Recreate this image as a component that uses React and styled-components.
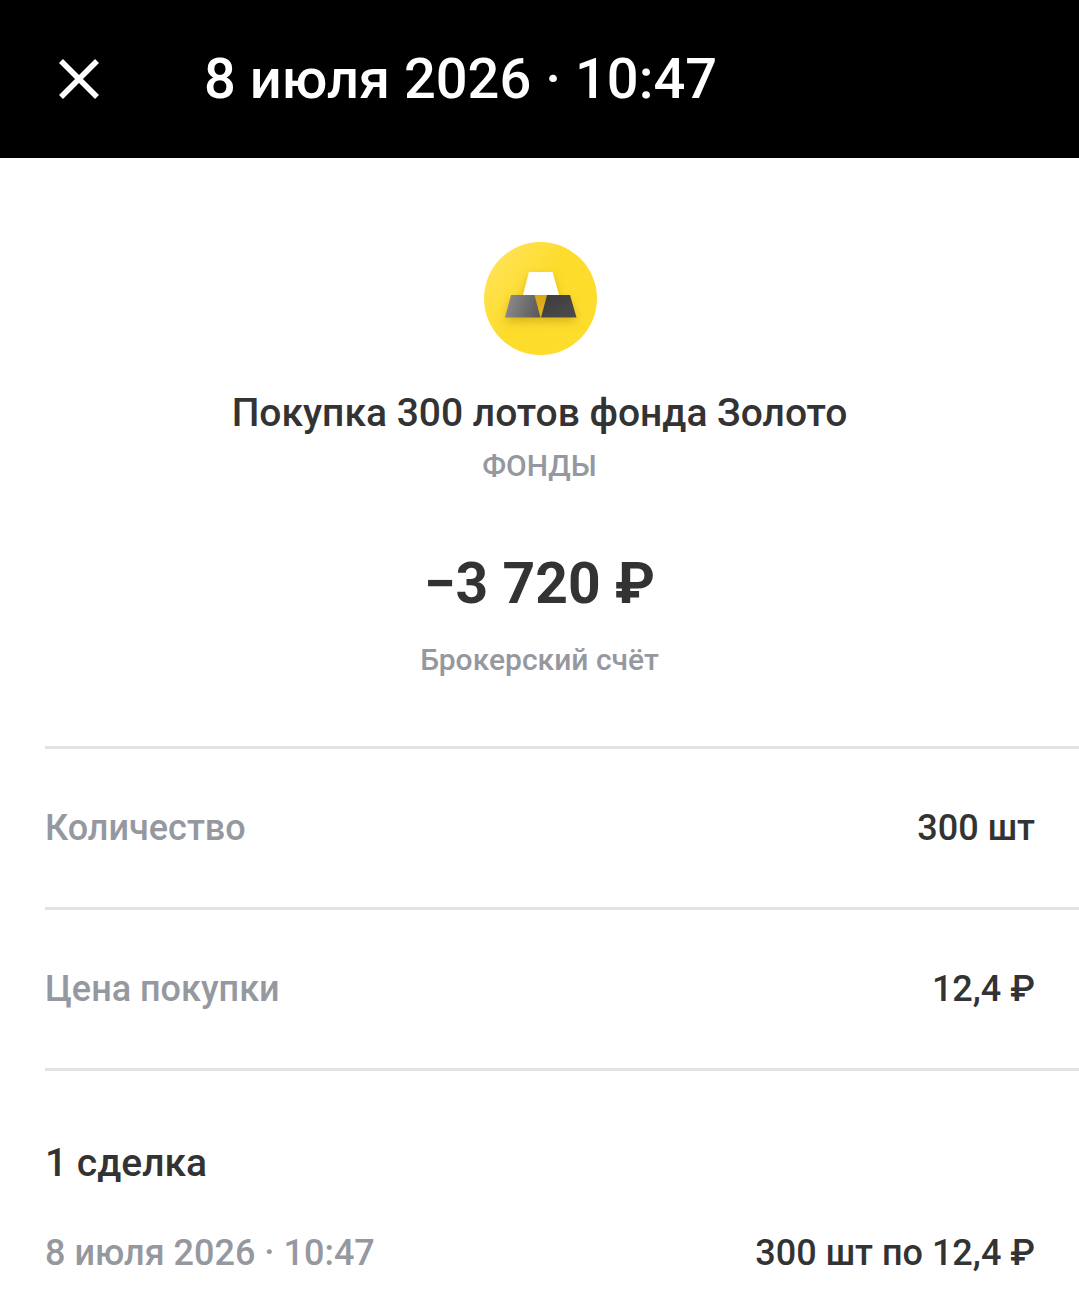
import React from "react";
import styled, { createGlobalStyle } from "styled-components";

const GlobalStyle = createGlobalStyle`
  body {
    margin: 0;
    background: #ffffff;
    color: #333333;
    font-family: Roboto, Arial, sans-serif;
    font-weight: 500;
  }
  * {
    box-sizing: border-box;
  }
`

//Top bar
const Header = styled.header`
  display: flex;
  align-items: center;
  gap: 86px;
  height: 158px;
  padding: 0 40px;
  background: #000000;
  color: #ffffff;
`

const CloseButton = styled.button`
  display: flex;
  padding: 16px;
  border: none;
  background: none;
  color: inherit;
  cursor: pointer;
`

const HeaderTitle = styled.h1`
  margin: 0;
  font-size: 56px;
  line-height: 64px;
  font-weight: 500;
`

//Operation summary
const Summary = styled.section`
  display: flex;
  flex-direction: column;
  align-items: center;
  padding: 82px 44px 66px;
  text-align: center;
`

const SummaryTitle = styled.h2`
  margin: 33px 0 9px;
  font-size: 39px;
  line-height: 48px;
  font-weight: 500;
`

const Caption = styled.p`
  margin: 0;
  color: #95989f;
  font-size: 30px;
  line-height: 40px;
`

const Amount = styled.p`
  margin: 62px 0 20px;
  font-size: 57px;
  line-height: 72px;
  font-weight: 700;
`

//Details list
const Details = styled.dl`
  margin: 0 0 0 45px;
  border-bottom: 3px solid #e2e3e4;
`

const DetailRow = styled.div`
  display: flex;
  align-items: center;
  justify-content: space-between;
  height: 161px;
  padding-right: 44px;
  border-top: 3px solid #e2e3e4;
  font-size: 36px;
  line-height: 48px;
`

const DetailLabel = styled.dt`
  color: #95989f;
`

const DetailValue = styled.dd`
  margin: 0;
`

//Deals
const Deals = styled.section`
  padding: 68px 44px 38px 45px;
`

const DealsTitle = styled.h3`
  margin: 0 0 42px;
  font-size: 39px;
  line-height: 48px;
  font-weight: 500;
`

const DealRow = styled.div`
  display: flex;
  justify-content: space-between;
  font-size: 36px;
  line-height: 48px;
`

const DealTime = styled.time`
  color: #95989f;
`

const CloseIcon = () => (
  <svg width="46" height="46" viewBox="0 0 46 46" fill="none" aria-hidden="true">
    <path d="M5 5L41 41M41 5L5 41" stroke="currentColor" strokeWidth="5.6" />
  </svg>
)

const GoldIcon = () => (
  <svg width="116" height="116" viewBox="0 0 116 116" role="img" aria-label="Золото">
    <defs>
      <linearGradient id="coin" x1="0" y1="0.1" x2="1" y2="0.9">
        <stop offset="0" stopColor="#ffe45e" />
        <stop offset="0.45" stopColor="#fddc2c" />
        <stop offset="1" stopColor="#ffdd2d" />
      </linearGradient>
      <linearGradient id="leftBar" x1="0" y1="0.4" x2="1" y2="0.6">
        <stop offset="0" stopColor="#8c8c8c" />
        <stop offset="1" stopColor="#5a5a5a" />
      </linearGradient>
      <linearGradient id="rightBar" x1="0" y1="0" x2="1" y2="1">
        <stop offset="0" stopColor="#3c3c3c" />
        <stop offset="1" stopColor="#4c4c4c" />
      </linearGradient>
      <linearGradient id="gap" x1="0" y1="0" x2="0" y2="1">
        <stop offset="0" stopColor="#d9a517" />
        <stop offset="1" stopColor="#e8b81c" />
      </linearGradient>
      <filter id="barShadow" x="-30%" y="-30%" width="160%" height="180%">
        <feDropShadow dx="0" dy="4" stdDeviation="5" floodColor="#a07800" floodOpacity="0.4" />
      </filter>
    </defs>
    <circle cx="58.5" cy="58.5" r="56.5" fill="url(#coin)" />
    <g filter="url(#barShadow)">
      <path d="M47 32H70.500L77 55H41Z" fill="#ffffff" />
      <path d="M52 55H65L58.500 77Z" fill="url(#gap)" />
      <path d="M29 55H52.500L58.500 77.500H23Z" fill="url(#leftBar)" />
      <path d="M65 55H88L94.500 77.500H59Z" fill="url(#rightBar)" />
    </g>
  </svg>
)

const details = [
  { label: "Количество", value: "300 шт" },
  { label: "Цена покупки", value: "12,4 ₽" },
]

const App = () => (
  <>
    <GlobalStyle />
    <Header>
      <CloseButton type="button" aria-label="Закрыть">
        <CloseIcon />
      </CloseButton>
      <HeaderTitle>8 июля 2026 · 10:47</HeaderTitle>
    </Header>
    <main>
      <Summary>
        <GoldIcon />
        <SummaryTitle>Покупка 300 лотов фонда Золото</SummaryTitle>
        <Caption>ФОНДЫ</Caption>
        <Amount>−3 720 ₽</Amount>
        <Caption>Брокерский счёт</Caption>
      </Summary>
      <Details>
        {details.map(item => (
          <DetailRow key={item.label}>
            <DetailLabel>{item.label}</DetailLabel>
            <DetailValue>{item.value}</DetailValue>
          </DetailRow>
        ))}
      </Details>
      <Deals>
        <DealsTitle>1 сделка</DealsTitle>
        <DealRow>
          <DealTime>8 июля 2026 · 10:47</DealTime>
          <span>300 шт по 12,4 ₽</span>
        </DealRow>
      </Deals>
    </main>
  </>
)

export default App;
